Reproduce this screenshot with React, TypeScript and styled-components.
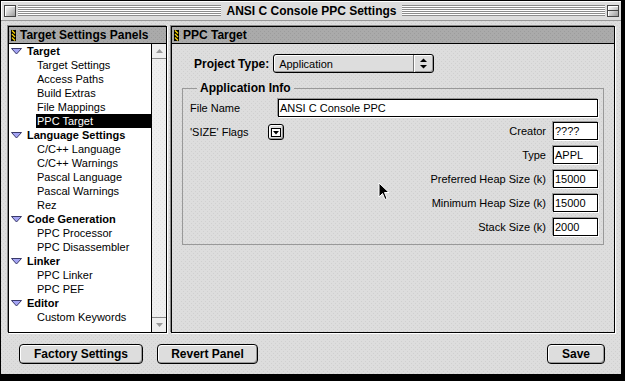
import { Fragment } from 'react';
import styled, { createGlobalStyle, css } from 'styled-components';

const GlobalStyle = createGlobalStyle`
  html, body {
    margin: 0;
    padding: 0;
    background: #000;
  }
  body {
    font-family: "Liberation Sans", Arial, sans-serif;
    font-size: 11px;
    color: #000;
  }
`;

// platinum dot texture
const dots = (base: string, dot: string) => css`
  background-color: ${base};
  background-image:
    conic-gradient(from 270deg at 1px 1px, ${dot} 90deg, transparent 0),
    conic-gradient(from 270deg at 1px 1px, ${dot} 90deg, transparent 0);
  background-size: 4px 4px;
  background-position: 0 0, 2px 2px;
`;

const bold = css`
  font-family: "Liberation Sans", Arial, sans-serif;
  font-weight: bold;
  font-size: 12px;
`;

const Screen = styled.div`
  width: 625px;
  height: 381px;
  background: #000;
  overflow: hidden;
`;

const Window = styled.div`
  position: relative;
  box-sizing: border-box;
  width: 622px;
  height: 375px;
  border: 1px solid #000;
  background: #dddddd;
  display: flex;
  flex-direction: column;
`;

const TitleBar = styled.div`
  height: 19px;
  flex: none;
  display: flex;
  align-items: center;
  gap: 2px;
  padding: 0 2px 0 3px;
  background: #dddddd;
  border-bottom: 1px solid #999;
  box-shadow: inset 1px 1px 0 #fff;
`;

const TitleBox = styled.div<{ $shade?: boolean }>`
  position: relative;
  box-sizing: border-box;
  width: 12px;
  height: 12px;
  flex: none;
  border: 1px solid #444;
  background: linear-gradient(135deg, #fff 0%, #ccc 55%, #999 100%);
  box-shadow: inset 1px 1px 0 #fff;
  ${(p) =>
    p.$shade &&
    css`
      &::after {
        content: '';
        position: absolute;
        left: 0;
        right: 0;
        top: 4px;
        height: 1px;
        background: #444;
      }
    `}
`;

const Stripes = styled.div`
  flex: 1;
  height: 11px;
  background: repeating-linear-gradient(to bottom, #8c8c8c 0 1px, #fff 1px 2px);
`;

const Title = styled.div`
  ${bold};
  padding: 0 3px;
  white-space: nowrap;
`;

const Body = styled.div`
  flex: 1;
  display: flex;
  flex-direction: column;
  padding: 5px 6px 0 7px;
  ${dots('#dddddd', '#d0d0d0')};
`;

const Panes = styled.div`
  display: flex;
  gap: 4px;
  height: 307px;
`;

const Pane = styled.div<{ $width?: number }>`
  box-sizing: border-box;
  width: ${(p) => (p.$width ? `${p.$width}px` : 'auto')};
  flex: ${(p) => (p.$width ? 'none' : '1')};
  border: 1px solid #000;
  box-shadow: -1px -1px 0 #888, 1px 1px 0 #fff;
  display: flex;
  flex-direction: column;
`;

const PaneHeader = styled.div`
  ${bold};
  height: 16px;
  flex: none;
  display: flex;
  align-items: center;
  gap: 4px;
  padding-left: 2px;
  border-bottom: 1px solid #000;
  ${dots('#aaaaaa', '#9c9c9c')};
  white-space: nowrap;
`;

const ListArea = styled.div`
  flex: 1;
  display: flex;
  background: #fff;
  min-height: 0;
`;

const List = styled.div`
  flex: 1;
  display: flex;
  flex-direction: column;
`;

const GroupRow = styled.div`
  ${bold};
  font-size: 11px;
  height: 14px;
  display: flex;
  align-items: center;
  gap: 5px;
  padding-left: 2px;
  white-space: nowrap;
`;

const ItemRow = styled.div`
  height: 14px;
  display: flex;
  padding-left: 27px;
`;

const ItemLabel = styled.div<{ $selected?: boolean }>`
  flex: 1;
  display: flex;
  align-items: center;
  padding-left: 1px;
  white-space: nowrap;
  background: ${(p) => (p.$selected ? '#000' : 'transparent')};
  color: ${(p) => (p.$selected ? '#fff' : '#000')};
`;

const ScrollBar = styled.div`
  width: 14px;
  flex: none;
  border-left: 1px solid #000;
  display: flex;
  flex-direction: column;
  ${dots('#eeeeee', '#e4e4e4')};
`;

const ScrollButton = styled.div<{ $down?: boolean }>`
  height: 14px;
  flex: none;
  display: flex;
  align-items: center;
  justify-content: center;
  background: #eeeeee;
  ${(p) => (p.$down ? 'border-top: 1px solid #888;' : 'border-bottom: 1px solid #888;')}
`;

const ScrollTrack = styled.div`
  flex: 1;
`;

const PaneBody = styled.div`
  flex: 1;
  display: flex;
  flex-direction: column;
  padding: 10px 10px 0 10px;
`;

const TopRow = styled.div`
  display: flex;
  align-items: center;
  gap: 4px;
  padding-left: 12px;
  height: 19px;
`;

const BoldLabel = styled.span`
  ${bold};
  white-space: nowrap;
`;

const Popup = styled.div`
  box-sizing: border-box;
  width: 161px;
  height: 19px;
  display: flex;
  border: 1px solid #000;
  border-radius: 3px;
  background: #dddddd;
  box-shadow: inset 1px 1px 0 #fff, inset -1px -1px 0 #999;
`;

const PopupText = styled.div`
  flex: 1;
  display: flex;
  align-items: center;
  padding-left: 5px;
`;

const PopupArrows = styled.div`
  width: 19px;
  display: flex;
  align-items: center;
  justify-content: center;
  border-left: 1px solid #777;
  box-shadow: inset 1px 0 0 #fff;
`;

const Group = styled.fieldset`
  margin: 8px 0 0 0;
  padding: 4px 5px 8px 7px;
  border: 1px solid #999;
  min-width: 0;
`;

const Legend = styled.legend`
  ${bold};
  line-height: 14px;
  padding: 0 3px;
  margin-left: 7px;
`;

const FileRow = styled.div`
  display: flex;
  align-items: center;
  height: 18px;
`;

const RowLabel = styled.span<{ $width: number }>`
  width: ${(p) => p.$width}px;
  flex: none;
  white-space: nowrap;
`;

const TextField = styled.div<{ $width?: number }>`
  box-sizing: border-box;
  height: 18px;
  width: ${(p) => (p.$width ? `${p.$width}px` : 'auto')};
  flex: ${(p) => (p.$width ? 'none' : '1')};
  border: 1px solid #000;
  background: #fff;
  padding-left: 1px;
  line-height: 16px;
  white-space: nowrap;
  box-shadow: -1px -1px 0 #999, 1px 1px 0 #fff;
`;

const Lower = styled.div`
  display: flex;
  justify-content: space-between;
  align-items: flex-start;
  margin-top: 5px;
`;

const FlagsRow = styled.div`
  display: flex;
  align-items: center;
  height: 18px;
  margin-top: 1px;
`;

const MenuButton = styled.div`
  box-sizing: border-box;
  width: 16px;
  height: 16px;
  display: flex;
  align-items: center;
  justify-content: center;
  border: 1px solid #000;
  border-radius: 3px;
  background: #dddddd;
  box-shadow: inset 1px 1px 0 #fff, inset -1px -1px 0 #999;
`;

const SizeGrid = styled.div`
  display: grid;
  grid-template-columns: auto 45px;
  column-gap: 7px;
  row-gap: 6px;
  align-items: center;
`;

const GridLabel = styled.span`
  text-align: right;
  white-space: nowrap;
`;

const ButtonBar = styled.div`
  display: flex;
  gap: 14px;
  margin: 11px 10px 0 11px;
`;

const PushButton = styled.button<{ $width: number; $push?: boolean }>`
  ${bold};
  box-sizing: border-box;
  width: ${(p) => p.$width}px;
  height: 20px;
  padding: 0;
  margin-left: ${(p) => (p.$push ? 'auto' : '0')};
  border: 1px solid #000;
  border-radius: 4px;
  background: #dddddd;
  color: #000;
  box-shadow: inset 1px 1px 0 #fff, inset -1px -1px 0 #999;
  white-space: nowrap;
`;

const Cursor = styled.svg`
  position: absolute;
  left: 377px;
  top: 181px;
  pointer-events: none;
`;

function Grip() {
  return (
    <svg width="5" height="11" viewBox="0 0 5 11">
      <rect x="0" y="0" width="5" height="11" fill="#000" />
      <path d="M1 0.5 L4 3.5 M1 4 L4 7 M1 7.5 L4 10.5" stroke="#f4d000" strokeWidth="1.4" />
    </svg>
  );
}

function Disclosure() {
  return (
    <svg width="11" height="7" viewBox="0 0 11 7">
      <polygon points="0.5,0.5 10.5,0.5 5.5,6" fill="#a4a4f4" stroke="#3a3a6a" strokeWidth="1" />
    </svg>
  );
}

function ScrollArrow({ down }: { down?: boolean }) {
  return (
    <svg width="7" height="4" viewBox="0 0 7 4">
      <polygon points={down ? '0,0 7,0 3.5,4' : '0,4 7,4 3.5,0'} fill="#999" />
    </svg>
  );
}

const tree = [
  { title: 'Target', items: ['Target Settings', 'Access Paths', 'Build Extras', 'File Mappings', 'PPC Target'] },
  { title: 'Language Settings', items: ['C/C++ Language', 'C/C++ Warnings', 'Pascal Language', 'Pascal Warnings', 'Rez'] },
  { title: 'Code Generation', items: ['PPC Processor', 'PPC Disassembler'] },
  { title: 'Linker', items: ['PPC Linker', 'PPC PEF'] },
  { title: 'Editor', items: ['Custom Keywords'] },
];

const sizeFields = [
  { label: 'Creator', value: '????' },
  { label: 'Type', value: 'APPL' },
  { label: 'Preferred Heap Size (k)', value: '15000' },
  { label: 'Minimum Heap Size (k)', value: '15000' },
  { label: 'Stack Size (k)', value: '2000' },
];

export default function App() {
  return (
    <Screen>
      <GlobalStyle />
      <Window>
        <TitleBar>
          <TitleBox />
          <Stripes />
          <Title>ANSI C Console PPC Settings</Title>
          <Stripes />
          <TitleBox $shade />
        </TitleBar>
        <Body>
          <Panes>
            <Pane $width={159}>
              <PaneHeader>
                <Grip />
                Target Settings Panels
              </PaneHeader>
              <ListArea>
                <List>
                  {tree.map((group) => (
                    <div key={group.title}>
                      <GroupRow>
                        <Disclosure />
                        {group.title}
                      </GroupRow>
                      {group.items.map((item) => (
                        <ItemRow key={item}>
                          <ItemLabel $selected={item === 'PPC Target'}>{item}</ItemLabel>
                        </ItemRow>
                      ))}
                    </div>
                  ))}
                </List>
                <ScrollBar>
                  <ScrollButton>
                    <ScrollArrow />
                  </ScrollButton>
                  <ScrollTrack />
                  <ScrollButton $down>
                    <ScrollArrow down />
                  </ScrollButton>
                </ScrollBar>
              </ListArea>
            </Pane>
            <Pane>
              <PaneHeader>
                <Grip />
                PPC Target
              </PaneHeader>
              <PaneBody>
                <TopRow>
                  <BoldLabel>Project Type:</BoldLabel>
                  <Popup>
                    <PopupText>Application</PopupText>
                    <PopupArrows>
                      <svg width="7" height="11" viewBox="0 0 7 11">
                        <polygon points="0,4 7,4 3.5,0.5" fill="#000" />
                        <polygon points="0,7 7,7 3.5,10.5" fill="#000" />
                      </svg>
                    </PopupArrows>
                  </Popup>
                </TopRow>
                <Group>
                  <Legend>Application Info</Legend>
                  <FileRow>
                    <RowLabel $width={88}>File Name</RowLabel>
                    <TextField>ANSI C Console PPC</TextField>
                  </FileRow>
                  <Lower>
                    <FlagsRow>
                      <RowLabel $width={78}>'SIZE' Flags</RowLabel>
                      <MenuButton>
                        <svg width="10" height="9" viewBox="0 0 10 9">
                          <rect x="0.5" y="0.5" width="9" height="8" fill="#fff" stroke="#000" />
                          <polygon points="2,3 8,3 5,6.5" fill="#000" />
                        </svg>
                      </MenuButton>
                    </FlagsRow>
                    <SizeGrid>
                      {sizeFields.map((f) => (
                        <Fragment key={f.label}>
                          <GridLabel>{f.label}</GridLabel>
                          <TextField $width={45}>{f.value}</TextField>
                        </Fragment>
                      ))}
                    </SizeGrid>
                  </Lower>
                </Group>
              </PaneBody>
            </Pane>
          </Panes>
          <ButtonBar>
            <PushButton $width={124}>Factory Settings</PushButton>
            <PushButton $width={101}>Revert Panel</PushButton>
            <PushButton $width={58} $push>
              Save
            </PushButton>
          </ButtonBar>
        </Body>
        <Cursor width="12" height="19" viewBox="0 0 12 19">
          <path d="M1 1 L1 15 L4.5 11.5 L7 17.5 L9 16.5 L6.5 10.5 L11 10.5 Z" fill="#000" stroke="#fff" strokeWidth="1" />
        </Cursor>
      </Window>
    </Screen>
  );
}
